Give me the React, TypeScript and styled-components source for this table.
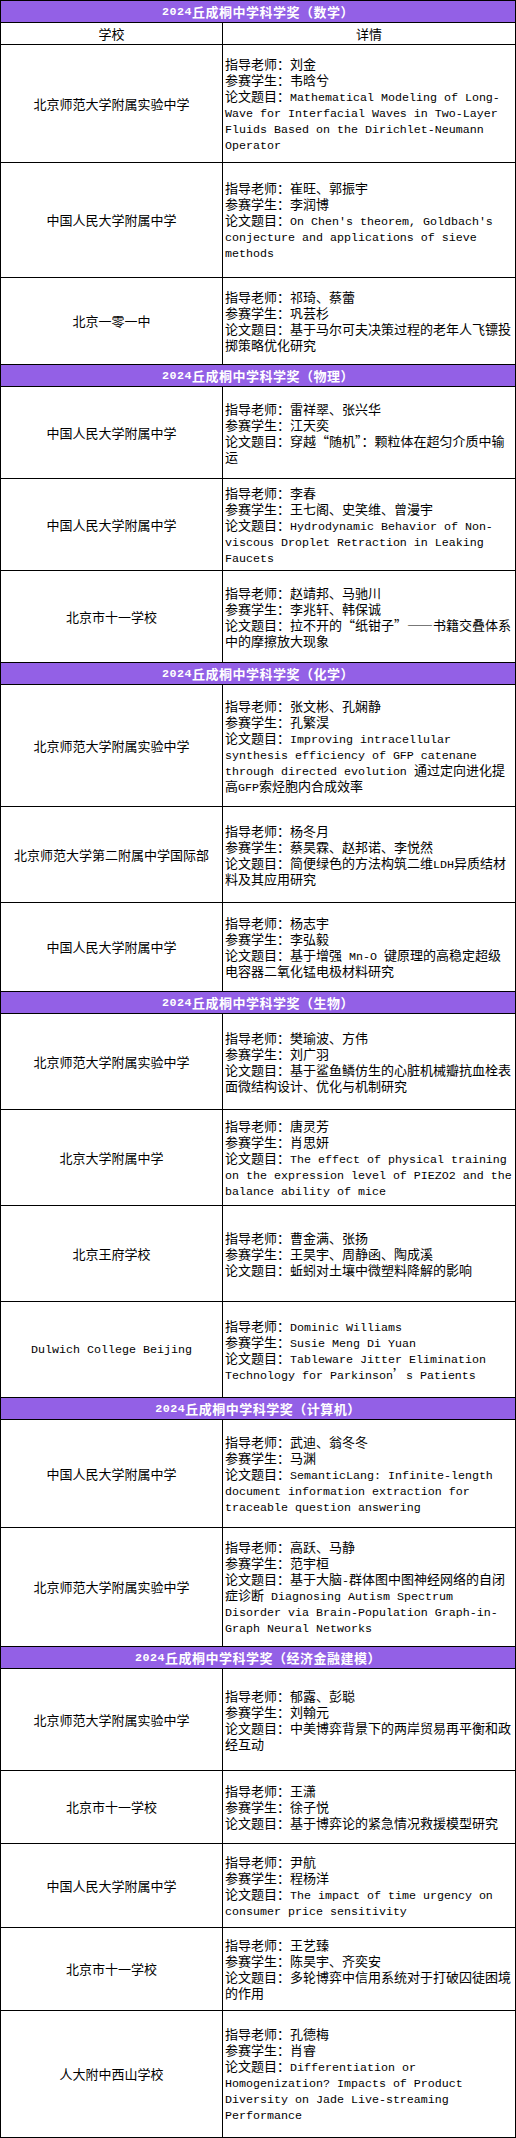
import React from "react";
import styled, { createGlobalStyle } from "styled-components";

const GlobalStyle = createGlobalStyle`
  *, *::before, *::after { box-sizing: border-box; }
  html, body { margin: 0; padding: 0; background: #ffffff; }
  body {
    font-family: "Noto Sans CJK SC", "Liberation Sans", sans-serif;
    color: #000000;
  }
`;

const Table = styled.div`
  width: 516px;
  display: flex;
  flex-direction: column;
  border: 1px solid #000;
  border-top: none;
  font-family: "Noto Sans CJK SC", "Liberation Sans", sans-serif;
  font-size: 13px;
  line-height: 16px;
  font-feature-settings: "fwid";
`;

const Row = styled.div<{ $h: number }>`
  display: grid;
  grid-template-columns: 222px 1fr;
  height: ${(p) => p.$h}px;
  border-top: 1px solid #000;
`;

const TitleRow = styled.div`
  display: flex;
  align-items: center;
  justify-content: center;
  height: 22px;
  border-top: 1px solid #000;
  background: #9360e6;
  color: #ffffff;
  font-weight: 700;
  letter-spacing: 0.5px;
  padding-top: 1px;
`;

const SchoolCell = styled.div`
  display: flex;
  align-items: center;
  justify-content: center;
  text-align: center;
  border-right: 1px solid #000;
  padding: 0 4px;
`;

const HeadCell = styled(SchoolCell)<{ $last?: boolean }>`
  border-right: ${(p) => (p.$last ? "none" : "1px solid #000")};
`;

const DetailCell = styled.div`
  display: flex;
  flex-direction: column;
  justify-content: center;
  padding: 0 2px 0 2px;
`;

const Line = styled.div`
  text-align: left;
  word-break: normal;
`;

const Latin = styled.span`
  font-family: "Liberation Mono", "DejaVu Sans Mono", monospace;
  font-size: 11.67px;
  line-height: 10px;
  font-feature-settings: normal;
`;

function Mixed({ text }: { text: string }) {
  const parts = text.split(/([\x20-\x7E]+)/);
  return (
    <>
      {parts.map((p, i) =>
        p === "" ? null : i % 2 === 1 ? <Latin key={i}>{p}</Latin> : <React.Fragment key={i}>{p}</React.Fragment>
      )}
    </>
  );
}

type Entry = {
  school: string;
  teacher: string;
  student: string;
  title: string;
  h: number;
};

type Section = { name: string; entries: Entry[] };

const sections: Section[] = [
  {
    name: "数学",
    entries: [
      {
        school: "北京师范大学附属实验中学",
        teacher: "刘金",
        student: "韦晗兮",
        title:
          "Mathematical Modeling of Long-Wave for Interfacial Waves in Two-Layer Fluids Based on the Dirichlet-Neumann Operator",
        h: 118,
      },
      {
        school: "中国人民大学附属中学",
        teacher: "崔旺、郭振宇",
        student: "李润博",
        title: "On Chen's theorem, Goldbach's conjecture and applications of sieve methods",
        h: 115,
      },
      {
        school: "北京一零一中",
        teacher: "祁琦、蔡蕾",
        student: "巩芸杉",
        title: "基于马尔可夫决策过程的老年人飞镖投掷策略优化研究",
        h: 87,
      },
    ],
  },
  {
    name: "物理",
    entries: [
      {
        school: "中国人民大学附属中学",
        teacher: "雷祥翠、张兴华",
        student: "江天奕",
        title: "穿越“随机”：颗粒体在超匀介质中输运",
        h: 92,
      },
      {
        school: "中国人民大学附属中学",
        teacher: "李春",
        student: "王七阁、史笑维、曾漫宇",
        title: "Hydrodynamic Behavior of Non-viscous Droplet Retraction in Leaking Faucets",
        h: 92,
      },
      {
        school: "北京市十一学校",
        teacher: "赵靖邦、马驰川",
        student: "李兆轩、韩保诚",
        title: "拉不开的“纸钳子”——书籍交叠体系中的摩擦放大现象",
        h: 92,
      },
    ],
  },
  {
    name: "化学",
    entries: [
      {
        school: "北京师范大学附属实验中学",
        teacher: "张文彬、孔娴静",
        student: "孔繁淏",
        title:
          "Improving intracellular synthesis efficiency of GFP catenane through directed evolution 通过定向进化提高GFP索烃胞内合成效率",
        h: 122,
      },
      {
        school: "北京师范大学第二附属中学国际部",
        teacher: "杨冬月",
        student: "蔡昊霖、赵邦诺、李悦然",
        title: "简便绿色的方法构筑二维LDH异质结材料及其应用研究",
        h: 96,
      },
      {
        school: "中国人民大学附属中学",
        teacher: "杨志宇",
        student: "李弘毅",
        title: "基于增强 Mn-O 键原理的高稳定超级电容器二氧化锰电极材料研究",
        h: 89,
      },
    ],
  },
  {
    name: "生物",
    entries: [
      {
        school: "北京师范大学附属实验中学",
        teacher: "樊瑜波、方伟",
        student: "刘广羽",
        title: "基于鲨鱼鳞仿生的心脏机械瓣抗血栓表面微结构设计、优化与机制研究",
        h: 96,
      },
      {
        school: "北京大学附属中学",
        teacher: "唐灵芳",
        student: "肖思妍",
        title: "The effect of physical training on the expression level of PIEZO2 and the balance ability of mice",
        h: 96,
      },
      {
        school: "北京王府学校",
        teacher: "曹金满、张扬",
        student: "王昊宇、周静函、陶成溪",
        title: "蚯蚓对土壤中微塑料降解的影响",
        h: 96,
      },
      {
        school: "Dulwich College Beijing",
        teacher: "Dominic Williams",
        student: "Susie Meng Di Yuan",
        title: "Tableware Jitter Elimination Technology for Parkinson’s Patients",
        h: 96,
      },
    ],
  },
  {
    name: "计算机",
    entries: [
      {
        school: "中国人民大学附属中学",
        teacher: "武迪、翁冬冬",
        student: "马渊",
        title: "SemanticLang: Infinite-length document information extraction for traceable question answering",
        h: 108,
      },
      {
        school: "北京师范大学附属实验中学",
        teacher: "高跃、马静",
        student: "范宇桓",
        title:
          "基于大脑-群体图中图神经网络的自闭症诊断 Diagnosing Autism Spectrum Disorder via Brain-Population Graph-in-Graph Neural Networks",
        h: 119,
      },
    ],
  },
  {
    name: "经济金融建模",
    entries: [
      {
        school: "北京师范大学附属实验中学",
        teacher: "郁露、彭聪",
        student: "刘翰元",
        title: "中美博弈背景下的两岸贸易再平衡和政经互动",
        h: 102,
      },
      {
        school: "北京市十一学校",
        teacher: "王潇",
        student: "徐子悦",
        title: "基于博弈论的紧急情况救援模型研究",
        h: 73,
      },
      {
        school: "中国人民大学附属中学",
        teacher: "尹航",
        student: "程杨洋",
        title: "The impact of time urgency on consumer price sensitivity",
        h: 84,
      },
      {
        school: "北京市十一学校",
        teacher: "王艺臻",
        student: "陈昊宇、齐奕安",
        title: "多轮博弈中信用系统对于打破囚徒困境的作用",
        h: 83,
      },
      {
        school: "人大附中西山学校",
        teacher: "孔德梅",
        student: "肖睿",
        title:
          "Differentiation or Homogenization? Impacts of Product Diversity on Jade Live-streaming Performance",
        h: 127,
      },
    ],
  },
];

function EntryRow({ e }: { e: Entry }) {
  return (
    <Row $h={e.h}>
      <SchoolCell>
        <Mixed text={e.school} />
      </SchoolCell>
      <DetailCell>
        <Line>
          指导老师：<Mixed text={e.teacher} />
        </Line>
        <Line>
          参赛学生：<Mixed text={e.student} />
        </Line>
        <Line>
          论文题目：<Mixed text={e.title} />
        </Line>
      </DetailCell>
    </Row>
  );
}

export default function App() {
  return (
    <>
      <GlobalStyle />
      <Table>
        {sections.map((s, si) => (
          <React.Fragment key={s.name}>
            <TitleRow>
              <Mixed text={`2024丘成桐中学科学奖（${s.name}）`} />
            </TitleRow>
            {si === 0 && (
              <Row $h={22}>
                <HeadCell>学校</HeadCell>
                <HeadCell $last>详情</HeadCell>
              </Row>
            )}
            {s.entries.map((e, i) => (
              <EntryRow key={i} e={e} />
            ))}
          </React.Fragment>
        ))}
      </Table>
    </>
  );
}
